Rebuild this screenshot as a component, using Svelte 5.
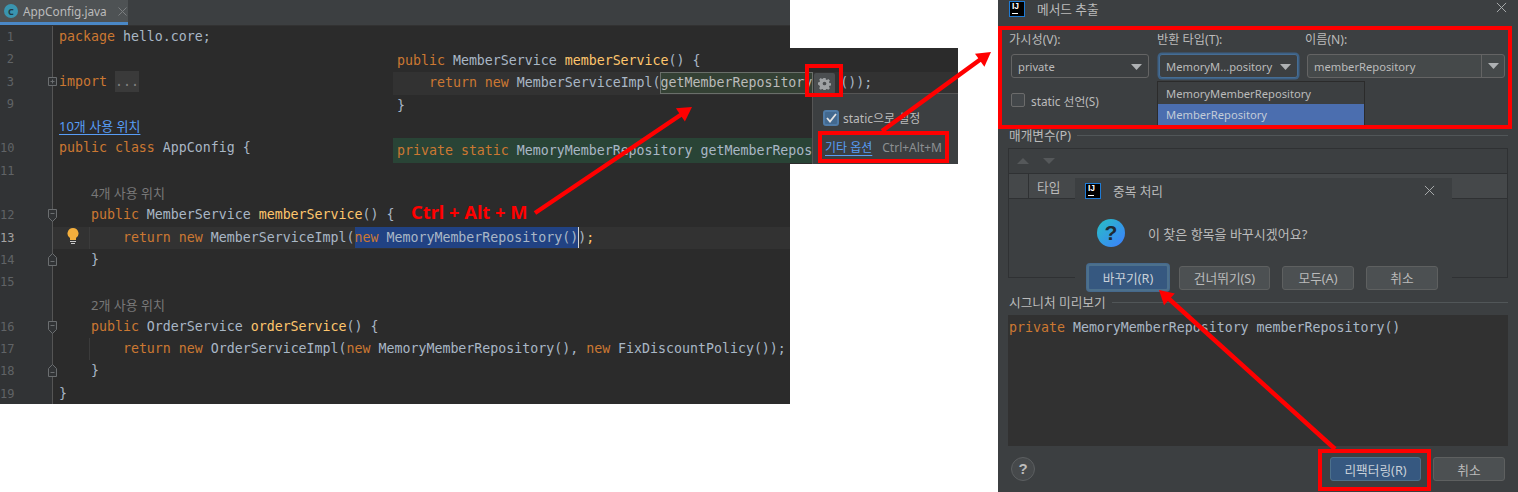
<script>
  const k = 'k', c = 't', m = 'm';
  const rows = [
    { n: '1', code: [[k, 'package '], [c, 'hello.core;']] },
    { n: '2', code: [] },
    { n: '3', code: [[k, 'import '], ['fold', '...']], fold: 'plus' },
    { n: '9', code: [] },
    { usage: '10개 사용 위치', link: true },
    { n: '10', code: [[k, 'public class '], [c, 'AppConfig {']] },
    { n: '11', code: [] },
    { usage: '4개 사용 위치', indent: true },
    { n: '12', code: [['i', '    '], [k, 'public '], [c, 'MemberService '], [m, 'memberService'], [c, '() {']], fold: 'open' },
    { n: '13', current: true, bulb: true, code: [['i', '        '], [k, 'return new '], [c, 'MemberServiceImpl('], ['sel', 'new '], ['selt', 'MemoryMemberRepository()'], ['caret', ''], [c, ')'], [m, ';']] },
    { n: '14', code: [['i', '    '], [c, '}']], fold: 'close' },
    { n: '15', code: [] },
    { usage: '2개 사용 위치', indent: true },
    { n: '16', code: [['i', '    '], [k, 'public '], [c, 'OrderService '], [m, 'orderService'], [c, '() {']], fold: 'open' },
    { n: '17', guide: true, code: [['i', '        '], [k, 'return new '], [c, 'OrderServiceImpl('], [k, 'new '], [c, 'MemoryMemberRepository(), '], [k, 'new '], [c, 'FixDiscountPolicy());']] },
    { n: '18', code: [['i', '    '], [c, '}']], fold: 'close' },
    { n: '19', code: [[c, '}']] }
  ];
  const resultRows = {
    sig: [[k, 'public '], [c, 'MemberService '], [m, 'memberService'], [c, '() {']],
    green: [[k, 'private static '], [c, 'MemoryMemberRepository getMemberRepos']],
    preview: [[k, 'private '], [c, 'MemoryMemberRepository memberRepository()']]
  };
</script>

{#snippet logo()}
  <span class="logo"><b>IJ</b><i></i></span>
{/snippet}

{#snippet close(cls)}
  <svg class={cls} width="12" height="12" viewBox="0 0 12 12"><path d="M1 1l10 10M11 1L1 11" stroke="#b0b3b5" stroke-width="1" fill="none"/></svg>
{/snippet}

{#snippet caret()}
  <svg width="11" height="6" viewBox="0 0 11 6"><path d="M0 0h11L5.5 6z" fill="#aeb1b3"/></svg>
{/snippet}

{#snippet tokens(list)}
  {#each list as [cls, text]}<span class={cls}>{text}</span>{/each}
{/snippet}

<div class="page">
  <section class="editor">
    <header class="tabs">
      <div class="tab">
        <span class="cicon">C</span>
        <span>AppConfig.java</span>
        <svg width="9" height="9" viewBox="0 0 9 9"><path d="M.5.5l8 8M8.5.5l-8 8" stroke="#7b7e80" fill="none"/></svg>
      </div>
    </header>
    <div class="lines">
      {#each rows as r}
        <div class="row" class:current={r.current}>
          <div class="gutter" class:bright={r.current}>
            <span class="num">{r.n ?? ''}</span>
            {#if r.fold}
              <svg class="foldmark" width="13" height="18" viewBox="0 0 13 18">
                {#if r.fold === 'plus'}
                  <path d="M2.500 4.500h8v8h-8zM4.500 8.500h4M6.500 6.500v4" stroke="#6b6e70" fill="#313335"/>
                {:else if r.fold === 'open'}
                  <path d="M2.500 3.500h8v8l-4 4-4-4zM4.500 7.500h4" stroke="#6b6e70" fill="#313335"/>
                {:else}
                  <path d="M2.500 14.500h8v-8l-4-4-4 4zM4.500 10.500h4" stroke="#6b6e70" fill="#313335"/>
                {/if}
              </svg>
            {/if}
          </div>
          <div class="code" class:guided={r.guide || r.current}>
            {#if r.bulb}
              <svg class="bulb" width="12" height="17" viewBox="0 0 12 17">
                <path d="M6 0a5.500 5.500 0 0 0-3 10.100V12h6v-1.900A5.500 5.500 0 0 0 6 0z" fill="#f4af3d"/>
                <path d="M3 13.500h6M4 15.500h4" stroke="#c9c9c9" stroke-width="1.200"/>
              </svg>
            {/if}
            {#if r.usage}
              <span class="usage" class:link={r.link} class:indent={r.indent}>{r.usage}</span>
            {:else}
              {@render tokens(r.code)}
            {/if}
          </div>
        </div>
      {/each}
    </div>
  </section>

  <section class="result">
    <div class="rrow">{@render tokens(resultRows.sig)}</div>
    <div class="rrow rcurrent">
      <span class="i">{'    '}</span><span class="k">{'return new '}</span><span class="t">MemberServiceImpl(</span><span class="boxed">getMemberRepository</span><span class="gear"><svg viewBox="0 0 14 14"><path fill-rule="evenodd" d="M5.800 1h2.400l.3 1.700 1.100.5 1.500-1 1.700 1.700-1 1.500.5 1.100 1.700.3v2.400l-1.700.3-.5 1.100 1 1.500-1.700 1.700-1.500-1-1.100.5-.3 1.700H5.800l-.3-1.700-1.100-.5-1.500 1-1.700-1.700 1-1.500-.5-1.100L0 8.200V5.800l1.700-.3.500-1.100-1-1.500 1.700-1.700 1.500 1 1.100-.5zM7 5a2 2 0 1 0 0 4 2 2 0 0 0 0-4z" fill="#9fa2a4"/></svg></span><span class="t">());</span>
    </div>
    <div class="rrow"><span class="t">{'}'}</span></div>
    <div class="rgreen">{@render tokens(resultRows.green)}</div>
    <div class="popup">
      <div class="check"><span class="box"><svg width="11" height="10" viewBox="0 0 11 10"><path d="M1 5l3 3.500L10 1" stroke="#e3e3e3" stroke-width="1.800" fill="none"/></svg></span><span>static으로 설정</span></div>
      <div class="more"><u>기타 옵션</u><span>Ctrl+Alt+M</span></div>
    </div>
  </section>

  <section class="dialog">
    <div class="title">{@render logo()}<span class="cap">메서드 추출</span>{@render close('x')}</div>

    <div class="labels"><span>가시성(V):</span><span>반환 타입(T):</span><span>이름(N):</span></div>
    <div class="combos">
      <div class="combo c1"><span>private</span>{@render caret()}</div>
      <div class="combo c2"><span>MemoryM...pository</span>{@render caret()}</div>
      <div class="combo c3"><span>memberRepository</span><em>{@render caret()}</em></div>
    </div>
    <div class="staticrow"><span class="cb"></span><span>static 선언(S)</span></div>

    <div class="section s1"><span class="cap">매개변수(P)</span><hr /></div>
    <div class="params">
      <div class="tools">
        <svg width="12" height="6" viewBox="0 0 12 6"><path d="M6 0l6 6H0z" fill="#55585a"/></svg>
        <svg width="12" height="6" viewBox="0 0 12 6"><path d="M0 0h12L6 6z" fill="#55585a"/></svg>
      </div>
      <div class="thead"><span class="c0"></span><span class="c-type">타입</span></div>
    </div>

    <div class="section s2"><span class="cap">시그니처 미리보기</span><hr /></div>
    <div class="preview">{@render tokens(resultRows.preview)}</div>

    <div class="footer">
      <span class="help">?</span>
      <button class="btn primary refactor">리팩터링(R)</button>
      <button class="btn cancel">취소</button>
    </div>

    <div class="inner">
      <div class="ititle">{@render logo()}<span class="cap">중복 처리</span>{@render close('x2')}</div>
      <div class="ask"><span class="q">?</span><span>이 찾은 항목을 바꾸시겠어요?</span></div>
      <div class="ibtns">
        <button class="btn primary focus">바꾸기(R)</button>
        <button class="btn skip">건너뛰기(S)</button>
        <button class="btn all">모두(A)</button>
        <button class="btn all">취소</button>
      </div>
    </div>

    <div class="drop">
      <div>MemoryMemberRepository</div>
      <div class="sel2">MemberRepository</div>
    </div>
  </section>

  <div class="hotkey">Ctrl + Alt + M</div>
  <div class="redbox rb-gear"></div>
  <div class="redbox rb-more"></div>
  <div class="redbox rb-form"></div>
  <div class="redbox rb-ref"></div>
  <svg class="arrows" width="1518" height="492" viewBox="0 0 1518 492">
    <g stroke="#f00" stroke-width="4.500" fill="none">
      <path d="M535 213L682 114" />
      <path d="M882 131L981 59" />
      <path d="M1335 449L1168 298" />
    </g>
    <g fill="#f00">
      <path d="M692 107L684.900 121.400L675.900 108.200z" />
      <path d="M991 52L984.400 66.700L975 53.700z" />
      <path d="M1159 290L1174.800 293.500L1164 305.300z" />
    </g>
  </svg>
</div>

<style>
  :global(body) { margin: 0; background: #fff; }
  .page { position: relative; width: 1518px; height: 492px; overflow: hidden; background: #fff; font-family: "Noto Sans", "Noto Sans CJK KR", sans-serif; font-size: 12px; color: #bbb; }

  .page :global(.k) { color: #cc7832; }
  .page :global(.t) { color: #a9b7c6; }
  .page :global(.m) { color: #ffc66d; }

  .editor { position: absolute; left: 0; top: 0; width: 790px; height: 404px; background: #2b2b2b; overflow: hidden; display: flex; flex-direction: column; }
  .tabs { height: 26px; flex: none; background: #3c3f41; border-bottom: 1px solid #323232; box-sizing: border-box; }
  .tab { width: 128px; height: 25px; box-sizing: border-box; background: #4e5254; border-bottom: 3px solid #4a88c7; display: flex; align-items: center; gap: 5px; padding-left: 4px; font-size: 11.800px; color: #bbb; }
  .tab svg { margin-left: 6px; }
  .cicon { width: 14px; height: 14px; border-radius: 50%; background: #3a95b0; color: #1f3a44; font-size: 9px; font-weight: 700; display: flex; align-items: center; justify-content: center; }

  .lines { flex: 1; font-family: "DejaVu Sans Mono", monospace; font-size: 13.280px; }
  .row { display: flex; height: 22.300px; line-height: 22.300px; }
  .gutter { width: 53px; flex: none; position: relative; background: #313335; border-right: 1px solid #555; box-sizing: border-box; color: #606366; font-size: 12px; }
  .gutter.bright { color: #a4a3a3; }
  .num { display: block; width: 14px; text-align: right; }
  .foldmark { position: absolute; right: -7px; top: 2px; }
  .code { flex: 1; padding-left: 6px; position: relative; white-space: nowrap; }
  .code :global(span), .rrow :global(span), .rgreen :global(span), .preview :global(span) { white-space: pre; }
  .current .code { background: #323232; }
  .guided::before { content: ""; position: absolute; left: 36px; top: 0; bottom: 0; border-left: 1px solid #3b3b3b; }
  .bulb { position: absolute; left: 14px; top: 1px; }
  .usage { font-family: "Noto Sans", "Noto Sans CJK KR", sans-serif; font-size: 13px; color: #787878; }
  .usage.indent { margin-left: 32px; }
  .usage.link { color: #589df6; text-decoration: underline; text-underline-offset: 3px; }
  .code :global(.fold) { background: #3a3a3a; color: #808080; padding: 3px 0; }
  .code :global(.sel) { background: #214283; color: #cc7832; padding: 3px 0; }
  .code :global(.selt) { background: #214283; color: #a9b7c6; padding: 3px 0; }
  .code :global(.caret) { border-left: 1px solid #d5d5d5; margin-right: -1px; padding: 3px 0; }

  .result { position: absolute; left: 393px; top: 48px; width: 565px; height: 116px; box-sizing: border-box; padding-top: 1.500px; background: #2b2b2b; font-family: "DejaVu Sans Mono", monospace; font-size: 13.280px; }
  .rrow { height: 22.500px; line-height: 22.500px; padding-left: 4px; }
  .rcurrent { background: #323232; display: flex; align-items: center; }
  .boxed { background: #344134; outline: 1px solid #6a6f6a; outline-offset: -1px; line-height: 22px; padding: 0 1px; margin-left: -1px; }
  .gear { width: 21px; height: 21px; margin: 0 5px 0 1px; background: #4b4e50; border-radius: 2px; display: flex; align-items: center; justify-content: center; flex: none; }
  .gear svg { width: 13px; height: 13px; }
  .rgreen { position: absolute; left: 0; top: 90px; width: 423px; height: 25px; padding-left: 4px; box-sizing: border-box; background: #294436; line-height: 25px; }
  .popup { position: absolute; left: 419px; top: 45px; width: 146px; height: 71px; box-sizing: border-box; background: #3c3f41; border: 1px solid #555; border-right: 0; border-bottom: 0; font-family: "Noto Sans", "Noto Sans CJK KR", sans-serif; font-size: 12px; padding: 14px 0 0 10px; white-space: nowrap; }
  .check { display: flex; align-items: center; gap: 4px; height: 20px; }
  .box { width: 16px; height: 16px; box-sizing: border-box; border-radius: 3px; background: #43698f; border: 2px solid #4f7ba7; display: flex; align-items: center; justify-content: center; }
  .more { display: flex; gap: 10px; margin-top: 9px; padding-left: 2px; align-items: center; height: 20px; white-space: nowrap; }
  .more u { color: #589df6; text-underline-offset: 3px; }
  .more span { color: #8c8f91; font-size: 12px; }

  .dialog { position: absolute; left: 998px; top: 0; width: 520px; height: 492px; background: #3c3f41; box-sizing: border-box; padding: 0 10px; white-space: nowrap; font-size: 12.700px; }
  .cap { margin-top: -2px; }
  .title { height: 18px; display: flex; align-items: center; gap: 12px; padding-left: 1px; position: relative; }
  .logo { width: 16px; height: 16px; box-sizing: border-box; background: #000; border: 1px solid #1e7bd6; display: block; position: relative; flex: none; color: #fff; }
  .logo b { position: absolute; left: 2px; top: -3px; font: 700 8.500px/14px "Liberation Sans", sans-serif; }
  .logo i { position: absolute; left: 2px; bottom: 2px; width: 6px; height: 1px; background: #fff; }
  .title svg, .ititle svg { flex: none; }
  .page :global(.x) { position: absolute; right: 1px; top: 2px; width: 11px; height: 11px; }
  .labels { margin-top: 14px; height: 16px; line-height: 16px; display: grid; grid-template-columns: 148px 148px 1fr; padding-left: 1px; font-size: 12.200px; }
  .combos { margin-top: 6px; display: flex; padding-left: 3px; font-size: 11.200px; }
  .combo { height: 24px; box-sizing: border-box; border: 1px solid #646464; border-radius: 3px; background: #3c3f41; display: flex; align-items: center; justify-content: space-between; padding: 1px 6px 0; }
  .c1 { width: 138px; }
  .c2 { width: 139px; margin-left: 10px; box-shadow: 0 0 0 1.500px #3d6185; border-color: #466d94; }
  .c3 { width: 198px; margin-left: 9px; background: #45494a; padding: 0 0 0 6px; }
  .c3 em { width: 22px; height: 22px; border-left: 1px solid #646464; display: flex; align-items: center; justify-content: center; }
  .staticrow { margin-top: 15px; height: 14px; display: flex; align-items: center; gap: 6px; padding-left: 3px; font-size: 11.800px; }
  .cb { width: 12px; height: 12px; border: 1px solid #6b6b6b; border-radius: 2px; background: #43474a; }
  .section { display: flex; align-items: center; gap: 6px; height: 16px; padding-left: 1px; }
  .section hr { flex: 1; border: 0; border-top: 1px solid #515658; margin: 0; }
  .s1 { margin-top: 20px; }
  .s2 { margin-top: 16px; }
  .params { margin-top: 5px; height: 130px; box-sizing: border-box; border: 1px solid #2f3133; }
  .tools { height: 25px; display: flex; align-items: center; gap: 14px; padding-left: 8px; box-sizing: border-box; border-bottom: 1px solid #2f3133; }
  .thead { height: 24px; display: flex; align-items: center; background: #45484a; border-bottom: 1px solid #2f3133; box-sizing: content-box; }
  .c0 { width: 19px; height: 100%; border-right: 1px solid #2f3133; }
  .c-type { padding-left: 8px; }
  .preview { margin-top: 5px; height: 131px; box-sizing: border-box; background: #313131; padding: 3px 1px; line-height: 20px; font-family: "DejaVu Sans Mono", monospace; font-size: 13.280px; }
  .footer { margin-top: 11px; display: flex; align-items: center; padding-left: 3px; }
  .help { width: 22px; height: 22px; border-radius: 50%; border: 1px solid #5c5f61; background: #46494b; color: #bbb; font: 700 15px/22px "Liberation Sans", sans-serif; text-align: center; }
  .btn { height: 24px; box-sizing: border-box; border: 1px solid #5e6060; border-radius: 3px; background: #4c5052; color: #bbb; font: inherit; padding: 0; }
  .btn.primary { background: #365880; border-color: #4c708c; color: #c8d0d8; }
  .refactor { width: 91px; margin-left: auto; }
  .cancel { width: 72px; margin-left: 12px; margin-right: 3px; }

  .inner { position: absolute; left: 77px; top: 178px; width: 377px; height: 116px; background: #3c3f41; }
  .ititle { height: 26px; display: flex; align-items: center; gap: 12px; padding: 0 0 0 10px; position: relative; }
  .page :global(.x2) { position: absolute; right: 17px; top: 7px; width: 11px; height: 11px; }
  .ask { height: 28px; margin-top: 15px; display: flex; align-items: center; gap: 23px; padding-left: 22px; font-size: 13px; }
  .q { width: 28px; height: 28px; border-radius: 50%; background: linear-gradient(135deg, #27c0c4, #3d7dff); color: #1f2a33; font: 700 21px/28px "Liberation Sans", sans-serif; text-align: center; }
  .ibtns { margin-top: 17px; padding-left: 12px; display: flex; align-items: center; }
  .focus { width: 82px; height: 27px; box-shadow: 0 0 0 1px #46698c; border: 2px solid #4f7ba7; }
  .skip { width: 91px; margin-left: 10px; }
  .all { width: 72px; margin-left: 12px; }

  .drop { position: absolute; left: 159px; top: 81px; width: 208px; height: 44px; box-sizing: border-box; border: 1px solid #2b2b2b; background: #3c3f41; font-size: 11.200px; padding-top: 1px; }
  .drop div { height: 21px; line-height: 21px; padding-left: 8px; }
  .sel2 { background: #4b6eaf; color: #c3ccd8; }

  .hotkey { position: absolute; left: 411px; top: 200px; height: 24px; line-height: 24px; color: #f00; font-weight: 700; font-size: 18.300px; white-space: nowrap; }
  .redbox { position: absolute; box-sizing: border-box; border: 4px solid #f00; }
  .rb-gear { left: 805px; top: 64px; width: 38px; height: 33px; }
  .rb-more { left: 818px; top: 131px; width: 131px; height: 32px; }
  .rb-form { left: 998px; top: 26px; width: 514px; height: 103px; }
  .rb-ref { left: 1318px; top: 449px; width: 113px; height: 42px; }
  .arrows { position: absolute; left: 0; top: 0; pointer-events: none; }
</style>
